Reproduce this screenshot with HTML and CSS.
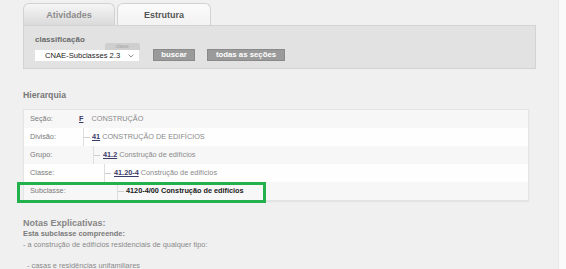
FILE: index.html
```html
<!DOCTYPE html>
<html lang="pt-BR">
<head>
  <meta charset="UTF-8" />
  <title>CNAE - Estrutura</title>
  <link rel="stylesheet" href="styles.css">
</head>
<body>
  <div class="page">

    <div class="tabs">
      <div class="tab">Atividades</div>
      <div class="tab active">Estrutura</div>
    </div>

    <div class="search-box">
      <div class="field-label">classificação</div>
      <div class="controls">
        <div class="select">
          <span class="select-tag">classe</span>
          <span class="select-text">CNAE-Subclasses 2.3</span>
          <svg class="chevron" width="6" height="4" viewBox="0 0 6 4"><path d="M0.5 0.5 L3 3 L5.5 0.5" fill="none" stroke="#888" stroke-width="0.9"/></svg>
        </div>
        <button class="btn">buscar</button>
        <button class="btn btn-wide">todas as seções</button>
      </div>
    </div>

    <h3 class="section-title">Hierarquia</h3>

    <div class="hierarchy">
      <div class="row">
        <div class="row-label">Seção:</div>
        <div class="row-value lvl-1"><a class="code-section">F</a> CONSTRUÇÃO</div>
      </div>
      <div class="row">
        <div class="row-label">Divisão:</div>
        <div class="row-value lvl-2"><span class="branch"><a>41</a> CONSTRUÇÃO DE EDIFÍCIOS</span></div>
      </div>
      <div class="row">
        <div class="row-label">Grupo:</div>
        <div class="row-value lvl-3"><span class="branch"><a>41.2</a> Construção de edifícios</span></div>
      </div>
      <div class="row">
        <div class="row-label">Classe:</div>
        <div class="row-value lvl-4"><span class="branch"><a>41.20-4</a> Construção de edifícios</span></div>
      </div>
      <div class="row">
        <div class="row-label">Subclasse:</div>
        <div class="row-value lvl-5"><span class="branch current">4120-4/00 Construção de edifícios</span></div>
      </div>
      <div class="highlight"></div>
    </div>

    <div class="notes">
      <div class="notes-title">Notas Explicativas:</div>
      <div class="notes-sub">Esta subclasse compreende:</div>
      <div>- a construção de edifícios residenciais de qualquer tipo:</div>
      <div>&nbsp;</div>
      <div class="indent">- casas e residências unifamiliares</div>
    </div>

  </div>
</body>
</html>
```

FILE: styles.css
```css
* {
  margin: 0; padding: 0; box-sizing: border-box;
  font-family: 'Liberation Sans', Arial, sans-serif;
}
html, body {
  height: 100%;
}
body {
  background: #fafafa;
  overflow: hidden;
}
.page {
  width: 559px;
  height: 100%;
  background: #f0f0f0;
  border-right: 1px solid #e6e6e6;
  padding: 3px 0 0 23px;
}

/* tabs */
.tabs {
  display: flex;
  gap: 2px;
  height: 22px;
}
.tab {
  width: 92px;
  border: 1px solid #d2d2d2;
  border-bottom: none;
  border-radius: 6px 6px 0 0;
  background: linear-gradient(#f6f6f6, #dadada);
  color: #8c8c8c;
  font-size: 9px;
  font-weight: bold;
  text-align: center;
  line-height: 22px;
}
.tab.active {
  width: 94px;
  background: linear-gradient(#fbfbfb, #f2f2f2);
  color: #555;
}

/* search */
.search-box {
  width: 513px;
  height: 44px;
  background: #e2e2e2;
  border: 1px solid #d3d3d3;
  padding: 9px 0 0 11px;
}
.field-label {
  font-size: 8px;
  font-weight: bold;
  color: #6a6a6a;
  line-height: 10px;
}
.controls {
  display: flex;
  align-items: center;
  margin-top: 4px;
  height: 12px;
}
.select {
  position: relative;
  width: 104px;
  height: 11px;
  background: #fff;
  display: flex;
  align-items: center;
  padding-left: 10px;
}
.select-text {
  font-size: 7.6px;
  color: #222;
  line-height: 11px;
}
.chevron {
  position: absolute;
  right: 5px;
  top: 4px;
}
.select-tag {
  position: absolute;
  right: -1px;
  top: -7px;
  width: 35px;
  height: 7px;
  background: #cfcfcf;
  border-radius: 2px 2px 0 0;
  color: #a3a3a3;
  font-size: 4.5px;
  line-height: 7px;
  text-align: center;
}
.btn {
  margin-left: 14px;
  width: 42px;
  height: 12px;
  background: #9a9a9a;
  border: 1px solid #8a8a8a;
  color: #fff;
  font-size: 7.8px;
  font-weight: bold;
  line-height: 10px;
}
.btn-wide {
  margin-left: 12px;
  width: 78px;
}

/* hierarchy */
.section-title {
  margin-top: 21px;
  font-size: 8.7px;
  font-weight: bold;
  color: #777;
  line-height: 10px;
}
.hierarchy {
  position: relative;
  margin-top: 9px;
  width: 506px;
  border: 1px solid #e4e4e4;
  box-shadow: 0 1px 1px rgba(0, 0, 0, 0.05);
}
.row {
  display: flex;
  height: 18px;
  background: #f7f7f7;
  font-size: 7.3px;
  color: #8a8a8a;
  line-height: 18px;
}
.row:nth-child(even) {
  background: #fefefe;
}
.row-label {
  width: 49px;
  padding-left: 6px;
  color: #7a7a7a;
}
.row-value a {
  color: #3b3b68;
  font-weight: bold;
  text-decoration: underline;
}
.row-value a.code-section {
  margin-right: 6px;
}
.lvl-1 { padding-left: 6px; }
.lvl-2 { padding-left: 10px; }
.lvl-3 { padding-left: 20px; }
.lvl-4 { padding-left: 31px; }
.lvl-5 { padding-left: 44px; }
.branch {
  display: inline-block;
  height: 18px;
  border-left: 1px solid #dedede;
  padding-left: 8px;
  position: relative;
}
.branch::before {
  content: "";
  position: absolute;
  left: 0;
  top: 9px;
  width: 6px;
  border-top: 1px solid #cfcfcf;
}
.lvl-3 .branch, .lvl-4 .branch {
  padding-left: 9px;
}
.branch.current {
  color: #1a1a1a;
  font-weight: bold;
}
.highlight {
  position: absolute;
  left: -7px;
  top: 72px;
  width: 249px;
  height: 21px;
  border: 3px solid #22b14c;
}

/* notes */
.notes {
  margin-top: 17px;
  font-size: 7.4px;
  color: #8a8a8a;
  line-height: 10.5px;
}
.notes-title {
  font-size: 9px;
  font-weight: bold;
  color: #858585;
  line-height: 11px;
}
.notes-sub {
  font-weight: bold;
  color: #7a7a7a;
}
.indent {
  padding-left: 4px;
}
```
